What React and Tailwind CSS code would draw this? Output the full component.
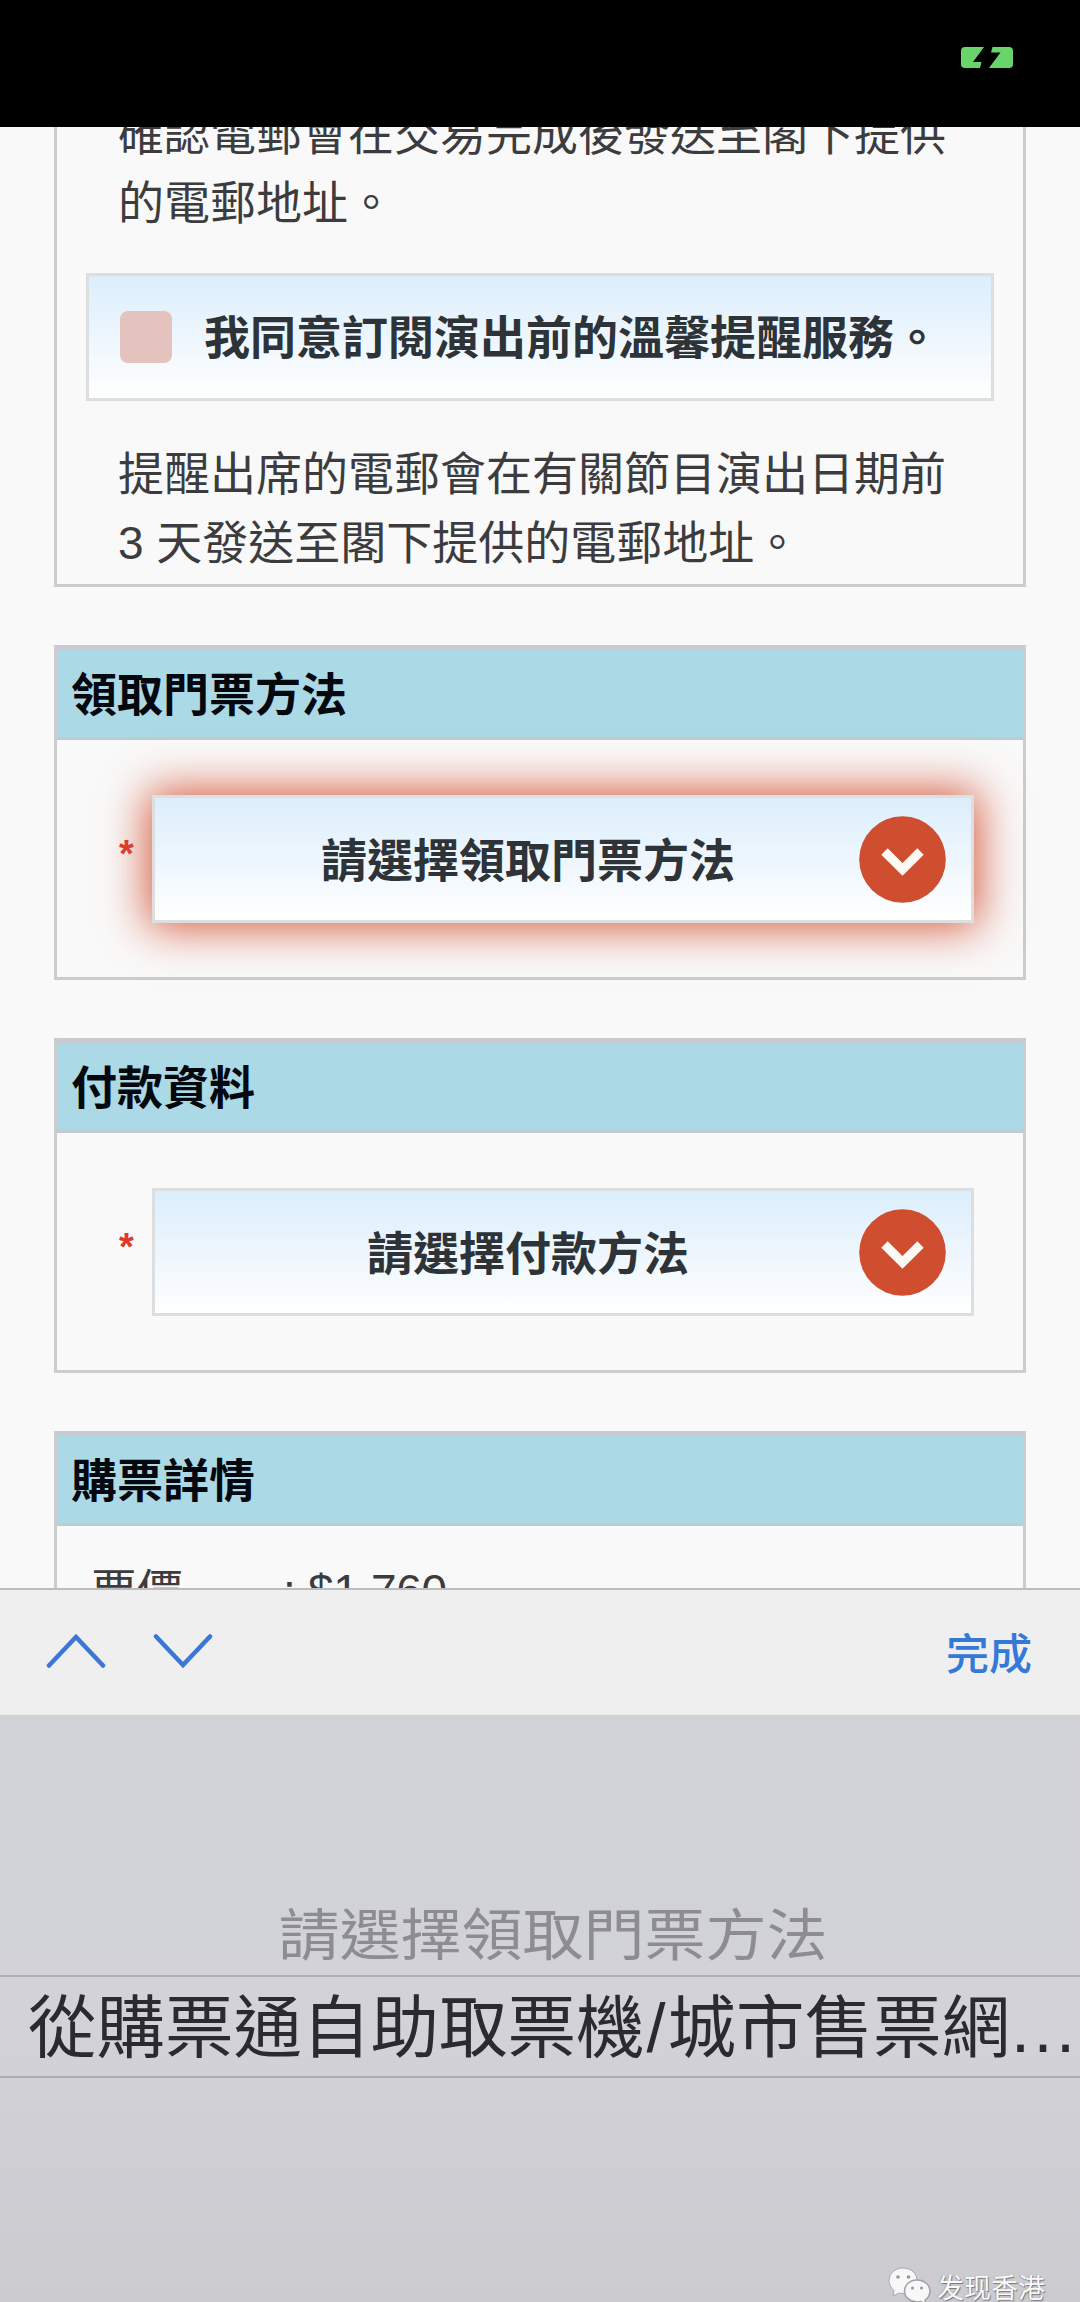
import React from 'react';

const ChevronBadge = () => (
    <svg className="h-[87px] w-[87px] flex-shrink-0" viewBox="0 0 87 87" fill="none">
        <circle cx="43.5" cy="43.5" r="43.3" fill="#cf4e30" />
        <path d="M25.500 35.500L43.500 53.500L61.500 35.500" stroke="#fdfaf5" strokeWidth="9" />
    </svg>
);

const Section = ({ title, className, children }) => (
    <section className={`border-x-[3px] border-[#cbcccd] ${className}`}>
        <h2 className="flex h-[95px] items-center border-t-[5px] border-b-[3px] border-t-[#c8ccd0] border-b-[#bccdd2] bg-[#acd9e6] pl-[14px] pt-1 text-[46px] font-bold leading-[69px] text-[#05090f]">
            {title}
        </h2>
        {children}
    </section>
);

const SelectField = ({ label, focused }) => (
    <div className="flex pt-[55px] pl-[62px]">
        <span className="w-[33px] flex-shrink-0 pt-[39px] text-[38px] font-bold leading-[40px] text-[#e0392b]">*</span>
        <div className={`flex h-[128px] w-[822px] items-center border-[3px] border-[#dcdee0] bg-linear-to-b from-[#dceefc] via-[#edf6fd] to-white pr-[25px] ${focused ? 'shadow-[0_0_42px_4px_#d4573a]' : ''}`}>
            <div className="flex-grow pt-[4px] pl-[42px] text-center text-[46px] font-bold leading-[69px] text-[#2e3338]">{label}</div>
            <ChevronBadge />
        </div>
    </div>
);

const StatusBar = () => (
    <div className="flex h-[127px] justify-end bg-black pt-[47px] pr-[67px]">
        <svg className="h-[21px] w-[52px]" viewBox="0 0 52 21">
            <path fill="#69d36c" d="M4 0H23L12 15H20.500L19 21H4Q0 21 0 17V4Q0 0 4 0Z" />
            <path fill="#69d36c" d="M31.500 0H48Q52 0 52 4V17Q52 21 48 21H28L39.500 5.500H30Z" />
        </svg>
    </div>
);

const Toolbar = () => (
    <div className="flex h-[127px] items-center border-t-2 border-[#bdbdbf] bg-[#efeff0] pl-[46px] pr-[48px]">
        <svg className="mb-[3px] h-[36px] w-[60px]" viewBox="0 0 60 36" fill="none">
            <path d="M3 32.500L30 4L57 32.500" stroke="#3d77d6" strokeWidth="4.500" strokeLinecap="round" />
        </svg>
        <svg className="mb-[3px] ml-[47px] h-[36px] w-[60px]" viewBox="0 0 60 36" fill="none">
            <path d="M3 3.500L30 32L57 3.500" stroke="#3d77d6" strokeWidth="4.500" strokeLinecap="round" />
        </svg>
        <button className="ml-auto pt-[4px] text-[43px] font-medium leading-[60px] text-[#3478d8]">完成</button>
    </div>
);

const Watermark = () => (
    <div className="absolute top-[552px] left-[888px] flex items-start">
        <svg className="h-[38px] w-[43px]" viewBox="0 0 43 38">
            <path fill="#f8f8f8" stroke="#a9a9ad" strokeWidth="1" d="M15 1C7 1 1 6.500 1 13.500C1 17.500 3 21 6 23.500L5 29L11 26C12 26.400 14 26.500 15 26.500C23 26.500 29 20.500 29 13.500C29 6.500 23 1 15 1Z" />
            <path fill="#f8f8f8" stroke="#a0a0a5" strokeWidth="1.500" d="M29 13C21.500 13 16.500 18 16.500 24C16.500 30.500 22 35 29 35L33 34.500L38 37.500L37 33C40 31 42 28 42 24C42 18 36.500 13 29 13Z" />
            <g fill="#96969b">
                <circle cx="10" cy="10" r="1.800" />
                <circle cx="20.500" cy="10" r="1.800" />
                <circle cx="24.500" cy="21" r="1.500" />
                <circle cx="33.500" cy="21" r="1.500" />
            </g>
        </svg>
        <span className="ml-[6px] pt-[2px] font-['Noto_Sans_CJK_SC',sans-serif] text-[27px] leading-[36px] text-[#fafafa] [text-shadow:1px_1px_1px_#77777c,-1px_0_1px_#a8a8ad]">发现香港</span>
    </div>
);

const Picker = () => (
    <div className="relative h-[587px] overflow-hidden bg-linear-to-b from-[#d1d2d7] via-[#d2d2d8] to-[#cbcbd0] pt-[174px]">
        <div className="flex h-[86px] items-center justify-center pt-[9px]">
            <span className="scale-y-[0.91] pl-[26px] text-[61px] leading-[77px] text-[#8c8c92]">請選擇領取門票方法</span>
        </div>
        <div className="flex h-[103px] items-center whitespace-nowrap border-y-2 border-[#adadb3] pt-[4px] pl-[28px] text-[68.5px] leading-[95px] text-[#2a2a30]">
            <span>從購票通自助取票機</span>
            <span className="w-[23px] text-center">/</span>
            <span>城市售票網</span>
            <span className="pl-[1px] tracking-[3.4px]">...</span>
        </div>
        <Watermark />
    </div>
);

const App = () => {
    return (
        <div className="h-[2302px] w-[1080px] overflow-hidden bg-[#f9f9f9] font-['Liberation_Sans','Noto_Sans_CJK_TC',sans-serif] text-[#3c3c3e]">
            <StatusBar />

            <main className="h-[1461px] overflow-hidden px-[54px]">
                {/* Email reminders */}
                <section className="-mt-[27px] border-x-[3px] border-b-[3px] border-[#cbcccd] pb-[6px] text-[46px] leading-[69px]">
                    <p className="whitespace-nowrap pl-[61px]">確認電郵會在交易完成後發送至閣下提供<br />的電郵地址。</p>
                    <label className="mt-[35px] mr-[29px] ml-[29px] flex h-[128px] items-center border-[3px] border-[#dcdee0] bg-linear-to-b from-[#dceefc] via-[#edf6fd] to-white pl-[31px] font-bold text-[#2e3338]">
                        <span className="mr-[32px] h-[52px] w-[52px] rounded-lg bg-[#e4c3be]" />
                        <span className="pt-[3px]">我同意訂閱演出前的溫馨提醒服務。</span>
                    </label>
                    <p className="mt-[39px] whitespace-nowrap pl-[61px]">提醒出席的電郵會在有關節目演出日期前<br />3 天發送至閣下提供的電郵地址。</p>
                </section>

                <Section title="領取門票方法" className="mt-[58px] h-[335px] border-b-[3px]">
                    <SelectField label="請選擇領取門票方法" focused />
                </Section>

                <Section title="付款資料" className="mt-[58px] h-[335px] border-b-[3px]">
                    <SelectField label="請選擇付款方法" />
                </Section>

                <Section title="購票詳情" className="mt-[58px]">
                    <div className="flex pt-[31px] pl-[34px] text-[46px] leading-[69px]">
                        <span className="w-[192px]">票價</span>
                        <span className="tracking-[-0.3px]">: $1,760</span>
                    </div>
                </Section>
            </main>

            <Toolbar />
            <Picker />
        </div>
    );
};

export default App;
